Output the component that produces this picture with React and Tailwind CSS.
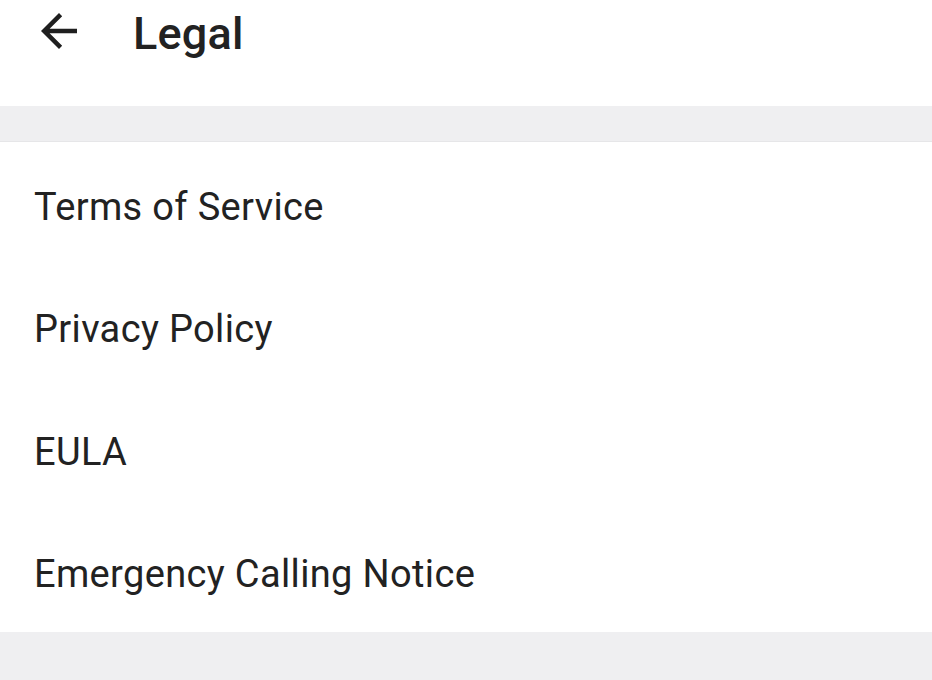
const items = ['Terms of Service', 'Privacy Policy', 'EULA', 'Emergency Calling Notice']

function BackArrow() {
  return (
    <svg width="54" height="54" viewBox="0 0 24 24" className="shrink-0 text-[#1f1f1f]">
      <path fill="currentColor" d="M20 11H7.83l5.59-5.59L12 4l-8 8 8 8 1.41-1.41L7.83 13H20v-2z" />
    </svg>
  )
}

export default function App() {
  return (
    <div className="flex h-[680px] w-[932px] flex-col overflow-hidden bg-white font-['Roboto',sans-serif] text-[#222222]">
      <header className="flex h-[106px] shrink-0 items-start">
        <div className="ml-[32px] mt-[4px]">
          <BackArrow />
        </div>
        <h1 className="ml-[47px] mt-[7px] text-[45px] font-medium leading-[54px] tracking-[0.2px]">Legal</h1>
      </header>
      <div className="h-[36px] shrink-0 border-b border-[#e6e6e8] bg-[#efeff1]" />
      <ul className="flex flex-col">
        {items.map((t) => (
          <li key={t} className="flex h-[122.5px] items-center pl-[34px] pt-[7px] text-[38px] leading-none tracking-[0.35px]">
            {t}
          </li>
        ))}
      </ul>
      <div className="flex-1 bg-[#efeff1]" />
    </div>
  )
}
